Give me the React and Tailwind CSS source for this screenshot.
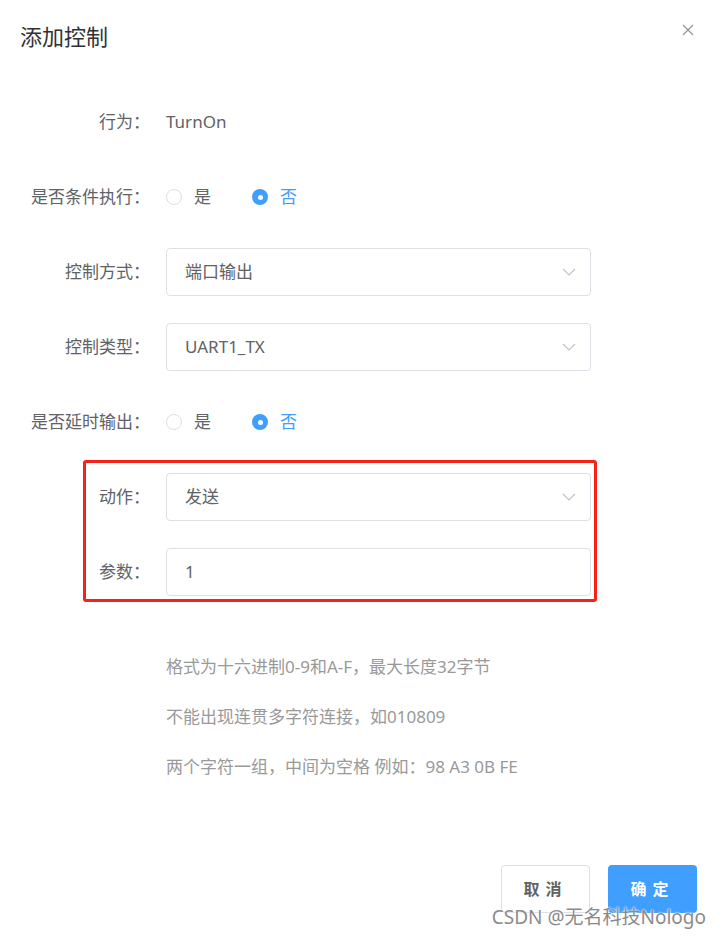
import React from "react"

function Chevron() {
  return (
    <svg width="14" height="8" viewBox="0 0 14 8" fill="none" className="shrink-0">
      <polyline points="1,1 7,7 13,1" stroke="#c0c4cc" strokeWidth="1.2" />
    </svg>
  )
}

function Row({ label, children }) {
  return (
    <div className="flex h-12 items-center">
      <div className="w-[150px] shrink-0 text-right text-[17px] text-[#606266]">{label}</div>
      <div className="ml-4 flex h-full w-[425px] items-center">{children}</div>
    </div>
  )
}

function SelectBox({ value }) {
  return (
    <div className="flex h-12 w-full items-center justify-between rounded-[4px] border border-[#dcdfe6] pl-[18px] pr-[14px] text-[17px] text-[#606266]">
      <span>{value}</span>
      <Chevron />
    </div>
  )
}

function Radio({ checked, label }) {
  return (
    <div className="flex items-center gap-3">
      {checked ? (
        <span className="flex h-4 w-4 items-center justify-center rounded-full bg-[#409eff]">
          <span className="h-[5px] w-[5px] rounded-full bg-white" />
        </span>
      ) : (
        <span className="h-4 w-4 rounded-full border border-[#dcdfe6] bg-white" />
      )}
      <span className={checked ? "text-[17px] text-[#409eff]" : "text-[17px] text-[#606266]"}>{label}</span>
    </div>
  )
}

function YesNo() {
  return (
    <div className="flex items-center gap-[41px]">
      <Radio label="是" />
      <Radio checked label="否" />
    </div>
  )
}

export default function App() {
  return (
    <div className="relative h-[937px] w-[720px] overflow-hidden bg-white font-['Noto_Sans','Noto_Sans_CJK_SC',sans-serif]">
      <div className="flex items-center justify-between pl-5 pr-[26px] pt-[24px]">
        <h2 className="text-[22px] leading-6 text-[#303133]">添加控制</h2>
        <svg width="12" height="12" viewBox="0 0 12 12" className="mt-[-12px]">
          <path d="M1 1 L11 11 M11 1 L1 11" stroke="#909399" strokeWidth="1.2" />
        </svg>
      </div>

      <div className="mt-[50px] flex flex-col gap-[27px]">
        <Row label="行为：">
          <span className="text-[17px] text-[#606266]">TurnOn</span>
        </Row>
        <Row label="是否条件执行：">
          <YesNo />
        </Row>
        <Row label="控制方式：">
          <SelectBox value="端口输出" />
        </Row>
        <Row label="控制类型：">
          <SelectBox value="UART1_TX" />
        </Row>
        <Row label="是否延时输出：">
          <YesNo />
        </Row>
        <div className="relative flex flex-col gap-[27px]">
          <Row label="动作：">
            <SelectBox value="发送" />
          </Row>
          <Row label="参数：">
            <div className="flex h-12 w-full items-center rounded-[4px] border border-[#dcdfe6] pl-[18px] text-[17px] text-[#606266]">
              1
            </div>
          </Row>
          <div className="pointer-events-none absolute left-[83px] top-[-13px] h-[142px] w-[514px] rounded-[3px] border-[3px] border-[#f5221b]" />
        </div>
      </div>

      <div className="mt-[61px] flex flex-col gap-[30px] pl-[166px] text-[17px] leading-5 text-[#999999]">
        <p>格式为十六进制0-9和A-F，最大长度32字节</p>
        <p>不能出现连贯多字符连接，如010809</p>
        <p>两个字符一组，中间为空格 例如：98 A3 0B FE</p>
      </div>

      <div className="mt-[88px] flex justify-end gap-[18px] pr-[23px]">
        <button className="h-12 w-[89px] rounded-[4px] border border-[#dcdfe6] bg-white text-[16px] font-semibold tracking-[6px] text-[#606266]">
          取消
        </button>
        <button className="h-12 w-[89px] rounded-[4px] bg-[#409eff] text-[16px] font-semibold tracking-[6px] text-white">
          确定
        </button>
      </div>

      <div className="absolute bottom-[6px] right-[14px] text-[19px] text-[#8a8a8a] [text-shadow:0_0_2px_#fff,0_0_2px_#fff]">
        CSDN @无名科技Nologo
      </div>
    </div>
  )
}
